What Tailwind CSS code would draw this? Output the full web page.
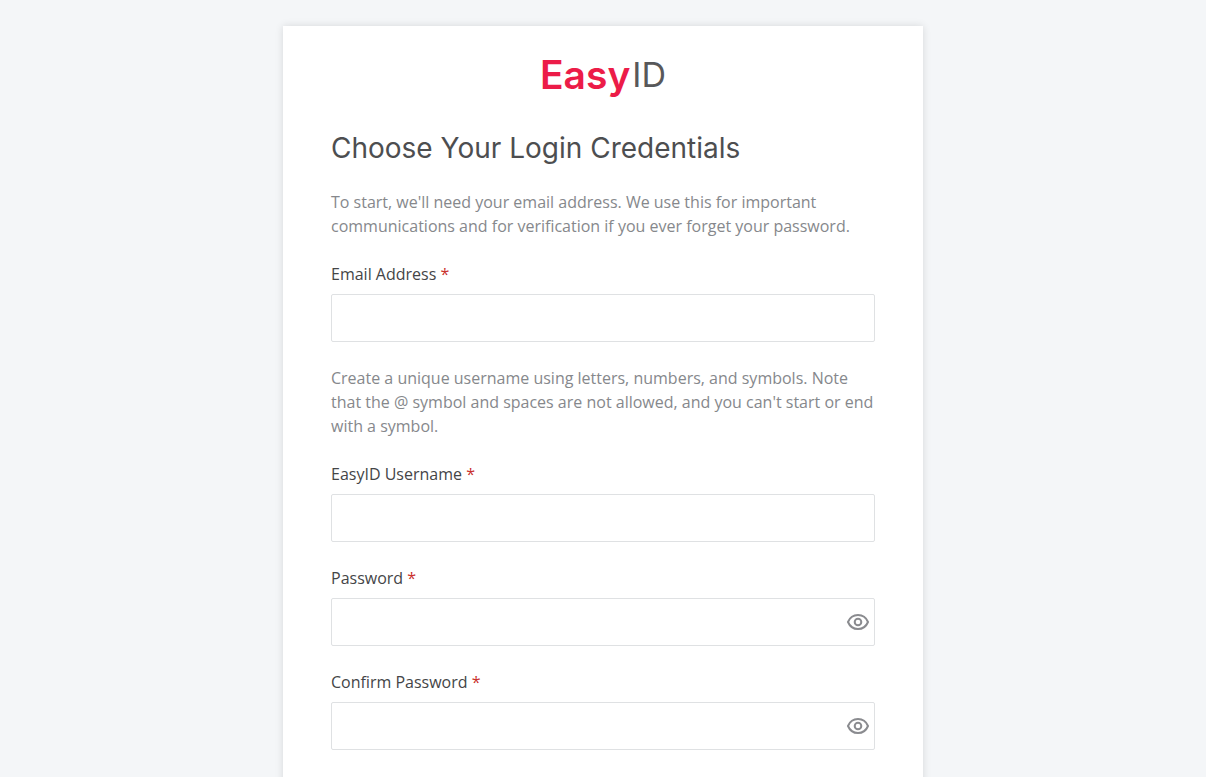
<!DOCTYPE html>
<html lang="en">
<head>
<meta charset="utf-8">
<meta name="viewport" content="width=device-width, initial-scale=1">
<title>EasyID - Choose Your Login Credentials</title>
<script src="https://cdn.jsdelivr.net/npm/@tailwindcss/browser@4"></script>
</head>
<body class="min-h-screen overflow-x-hidden bg-[#f4f6f8] font-['Open_Sans',sans-serif] text-base text-[#444547] [scrollbar-width:none]">
<main class="mx-auto mt-[26px] max-w-[640px] bg-white px-12 pt-7 pb-12 shadow-[0_0_8px_rgba(0,0,0,0.12)]">
  <div class="flex items-center justify-center gap-0.5 leading-[42px]" aria-label="EasyID">
    <span class="font-['Inter',sans-serif] text-[39px] font-semibold text-[#ec1c48]">Easy</span>
    <span class="font-['Inter',sans-serif] text-[34px] font-normal text-[#58585a]">ID</span>
  </div>
  <h1 class="mt-8 font-['Inter',sans-serif] text-[28px] font-normal leading-10 text-[#4d4e50]">Choose Your Login Credentials</h1>
  <form class="mt-[22px] flex flex-col gap-6">
    <p class="text-[#86888c]">To start, we'll need your email address. We use this for important communications and for verification if you ever forget your password.</p>
    <div class="flex flex-col gap-2">
      <label for="email">Email Address <span class="text-[#c9302c]">*</span></label>
      <input id="email" type="email" required class="h-12 w-full rounded-xs border border-[#dfe1e3] bg-white px-3 shadow-none outline-none">
    </div>
    <p class="text-[#86888c]">Create a unique username using letters, numbers, and symbols. Note that the @ symbol and spaces are not allowed, and you can't start or end with a symbol.</p>
    <div class="flex flex-col gap-2">
      <label for="username">EasyID Username <span class="text-[#c9302c]">*</span></label>
      <input id="username" type="text" required class="h-12 w-full rounded-xs border border-[#dfe1e3] bg-white px-3 shadow-none outline-none">
    </div>
    <div class="flex flex-col gap-2">
      <label for="password">Password <span class="text-[#c9302c]">*</span></label>
      <div class="flex h-12 items-center rounded-xs border border-[#dfe1e3] pr-1">
        <input id="password" type="password" required class="h-full min-w-0 flex-1 px-3 shadow-none outline-none">
        <button type="button" aria-label="Show password" class="text-[#8a8b8f]">
          <svg class="size-6" viewBox="0 0 24 24" fill="none" stroke="currentColor" stroke-width="2"><path d="M2 12C3.700 7.900 7.500 5 12 5s8.300 2.900 10 7c-1.700 4.100-5.500 7-10 7S3.700 16.100 2 12z"/><circle cx="12" cy="12" r="3.300"/></svg>
        </button>
      </div>
    </div>
    <div class="flex flex-col gap-2">
      <label for="confirm">Confirm Password <span class="text-[#c9302c]">*</span></label>
      <div class="flex h-12 items-center rounded-xs border border-[#dfe1e3] pr-1">
        <input id="confirm" type="password" required class="h-full min-w-0 flex-1 px-3 shadow-none outline-none">
        <button type="button" aria-label="Show confirmed password" class="text-[#8a8b8f]">
          <svg class="size-6" viewBox="0 0 24 24" fill="none" stroke="currentColor" stroke-width="2"><path d="M2 12C3.700 7.900 7.500 5 12 5s8.300 2.900 10 7c-1.700 4.100-5.500 7-10 7S3.700 16.100 2 12z"/><circle cx="12" cy="12" r="3.300"/></svg>
        </button>
      </div>
    </div>
  </form>
</main>
</body>
</html>
